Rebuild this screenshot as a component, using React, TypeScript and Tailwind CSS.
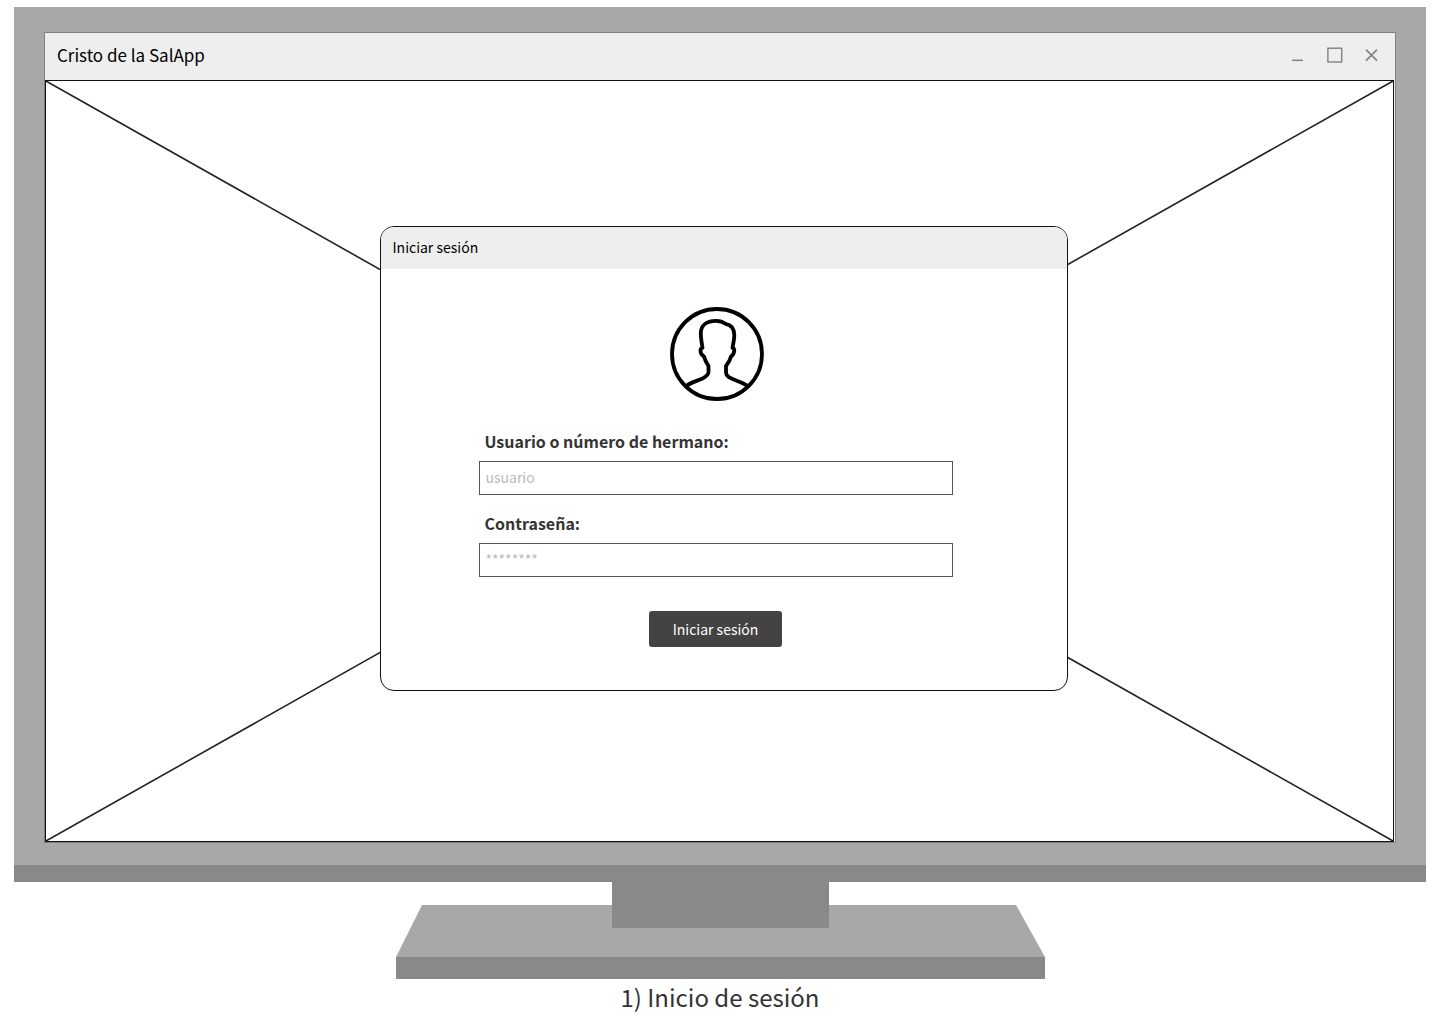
import type { ReactNode } from "react";

function WindowControls() {
  return (
    <div className="flex items-center gap-3 text-[#808080]">
      <button type="button" aria-label="Minimizar" className="size-6">
        <svg viewBox="0 0 24 24" className="size-6" fill="none" stroke="currentColor" strokeWidth="1.5">
          <path d="M5.2 17.3H16" />
        </svg>
      </button>
      <button type="button" aria-label="Maximizar" className="size-6">
        <svg viewBox="0 0 24 24" className="size-6" fill="none" stroke="currentColor" strokeWidth="1.4">
          <rect x="4.9" y="5.2" width="13.8" height="13.8" />
        </svg>
      </button>
      <button type="button" aria-label="Cerrar" className="size-6">
        <svg viewBox="0 0 24 24" className="size-6" fill="none" stroke="currentColor" strokeWidth="1.6">
          <path d="M7 6.600l11 11M18 6.600l-11 11" />
        </svg>
      </button>
    </div>
  );
}

function Avatar() {
  return (
    <svg viewBox="0 0 96 96" className="size-24" fill="none" stroke="#000" strokeWidth="4" role="img" aria-label="Usuario">
      <circle cx="49" cy="48" r="45" strokeWidth="3.8" />
      <path
        strokeWidth="3.8"
        strokeLinejoin="round"
        d="M18.8 79.5C23 76.5 29 75 34.500 72.500C38.500 70.500 40.500 68.500 40.500 66V60C38.500 57 37 54.500 36 50.500C34 49.500 32.500 47 32.500 44.500C32.500 43.200 33 42.200 34.500 41.800C33.500 36 32.800 31 32.800 27C33 19 39 14.800 48 14.800C52 14.800 55 15.800 57.500 17.800C63.500 18.800 66.300 23 66.300 29C66.300 33 65.300 37.500 64.500 41.800C65.900 42.200 66.300 43.200 66.300 44.500C66 47 65 49.500 63 50.500C62 54.500 60.500 57 58 60V66C58 69 60 71 63.500 72.500C69 75 74.500 76.500 79.200 79.500"
      />
    </svg>
  );
}

function Field({ id, label, children }: { id: string; label: string; children: ReactNode }) {
  return (
    <div>
      <label htmlFor={id} className="block pl-1.5 text-base leading-6 font-bold text-[#333]">
        {label}
      </label>
      <div className="mt-2 flex">{children}</div>
    </div>
  );
}

const inputClass =
  "h-[34px] w-full border border-[#555] bg-white px-1.5 pb-0.5 text-sm text-[#333] outline-none placeholder:text-[#bbb]";

function LoginDialog() {
  return (
    <section
      aria-label="Iniciar sesión"
      className="relative w-full max-w-[688px] overflow-hidden rounded-[14px] border border-[#111] bg-white pb-[43px]"
    >
      <h2 className="h-[42px] bg-[#eee] pt-2 pl-3 text-sm leading-6 text-black">Iniciar sesión</h2>
      <form className="ml-[98px] flex max-w-[474px] flex-col pt-[37px]" onSubmit={(e) => e.preventDefault()}>
        <div className="flex justify-center">
          <Avatar />
        </div>
        <div className="mt-[27px] flex flex-col gap-4">
          <Field id="usuario" label="Usuario o número de hermano:">
            <input id="usuario" type="text" placeholder="usuario" className={inputClass} />
          </Field>
          <Field id="clave" label="Contraseña:">
            <input id="clave" type="password" placeholder="********" className={inputClass} />
          </Field>
        </div>
        <button
          type="submit"
          className="mt-[34px] h-9 self-center rounded-[3px] bg-[#434343] px-6 text-sm leading-6 text-white"
        >
          Iniciar sesión
        </button>
      </form>
    </section>
  );
}

function Desktop() {
  return (
    <div className="relative mr-px flex justify-center border border-[#111] bg-white pt-[145px] pb-[150px] pl-2">
      <svg className="absolute inset-0 size-full" preserveAspectRatio="none" viewBox="0 0 100 100" aria-hidden="true">
        <path d="M0 0L100 100M100 0L0 100" fill="none" stroke="#222" strokeWidth="1.6" vectorEffect="non-scaling-stroke" />
      </svg>
      <LoginDialog />
    </div>
  );
}

function Stand() {
  return (
    <svg viewBox="0 0 650 99" className="mx-auto block w-[650px] max-w-full" aria-hidden="true">
      <path d="M27 23H621L650 75H1Z" fill="#a8a8a8" />
      <rect x="1" y="75" width="649" height="22" fill="#898989" />
      <rect x="217" width="217" height="46" fill="#898989" />
    </svg>
  );
}

export default function App() {
  return (
    <main className="bg-white pt-[7px] font-['Noto_Sans_CJK_SC',sans-serif]">
      <figure>
        <div className="mx-3.5 border-b-[17px] border-[#898989] bg-[#a8a8a8] px-[30px] pt-[25px] pb-[22px]">
          <div className="border border-[#808080] bg-[#eee]">
            <header className="flex h-[47px] items-center justify-between px-3 pb-[3px]">
              <h1 className="text-[17px] leading-6 text-black">Cristo de la SalApp</h1>
              <WindowControls />
            </header>
            <Desktop />
          </div>
        </div>
        <Stand />
        <figcaption className="text-center text-2xl leading-8 text-[#333]">1) Inicio de sesión</figcaption>
      </figure>
    </main>
  );
}
